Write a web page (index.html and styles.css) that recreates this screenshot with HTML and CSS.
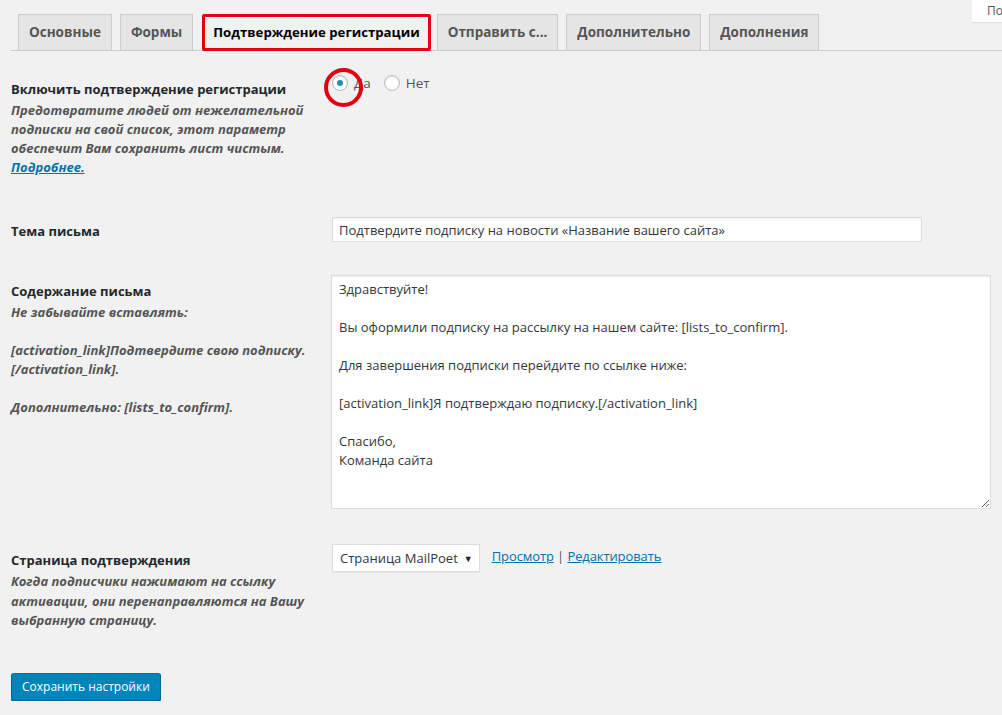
FILE: index.html
```
<!DOCTYPE html>
<html lang="ru">
	<head>
		<meta charset="UTF-8" />
		<meta name="viewport" content="width=device-width, initial-scale=1.0" />
		<title>Подтверждение регистрации</title>
		<link rel="stylesheet" href="styles.css">
	</head>
	<body>
		<div class="help-tab">Помощь</div>

		<div class="wrap">
			<nav class="tabs">
				<a class="tab" href="#">Основные</a>
				<a class="tab" href="#">Формы</a>
				<a class="tab active" href="#">Подтверждение регистрации</a>
				<a class="tab" href="#">Отправить с...</a>
				<a class="tab" href="#">Дополнительно</a>
				<a class="tab" href="#">Дополнения</a>
			</nav>

			<form class="settings">
				<div class="row row_confirm">
					<div class="label">
						<h4>Включить подтверждение регистрации</h4>
						<p class="desc">Предотвратите людей от нежелательной подписки на свой список, этот параметр обеспечит Вам сохранить лист чистым. <a href="#">Подробнее.</a></p>
					</div>
					<div class="field radios">
						<label class="radio">
							<span class="mark"><input type="radio" name="confirm" checked /></span>Да
						</label>
						<label class="radio">
							<input type="radio" name="confirm" />Нет
						</label>
					</div>
				</div>

				<div class="row row_subject">
					<div class="label">
						<h4>Тема письма</h4>
					</div>
					<div class="field">
						<input class="text" type="text" value="Подтвердите подписку на новости «Название вашего сайта»" />
					</div>
				</div>

				<div class="row row_body">
					<div class="label">
						<h4>Содержание письма</h4>
						<p class="desc">Не забывайте вставлять:</p>
						<p class="desc gap">[activation_link]Подтвердите свою подписку.<br />[/activation_link].</p>
						<p class="desc gap">Дополнительно: [lists_to_confirm].</p>
					</div>
					<div class="field">
						<textarea class="body">Здравствуйте!

Вы оформили подписку на рассылку на нашем сайте: [lists_to_confirm].

Для завершения подписки перейдите по ссылке ниже:

[activation_link]Я подтверждаю подписку.[/activation_link]

Спасибо,
Команда сайта</textarea>
					</div>
				</div>

				<div class="row row_page">
					<div class="label">
						<h4>Страница подтверждения</h4>
						<p class="desc">Когда подписчики нажимают на ссылку активации, они перенаправляются на Вашу выбранную страницу.</p>
					</div>
					<div class="field page">
						<span class="select">Страница MailPoet<i>▼</i></span>
						<span class="links"><a href="#">Просмотр</a> | <a href="#">Редактировать</a></span>
					</div>
				</div>

				<button class="save" type="button">Сохранить настройки</button>
			</form>
		</div>
	</body>
</html>
```
FILE: styles.css
```
* {
	padding: 0;
	margin: 0;
	box-sizing: border-box;
}

body {
	background-color: #f1f1f1;
	color: #23282d;
	font-family: "Open Sans", "Noto Sans", sans-serif;
	font-size: 13px;
	line-height: 19px;
	position: relative;
}

a {
	color: #0073aa;
}

.help-tab {
	position: absolute;
	top: 0;
	right: 0;
	width: 30px;
	height: 22px;
	padding-left: 15px;
	background-color: #fff;
	color: #555;
	font-size: 12px;
	line-height: 22px;
	white-space: nowrap;
	overflow: hidden;
	box-shadow: 0 1px 1px rgba(0, 0, 0, 0.06);
}

.wrap {
	padding: 15px 0 0 11px;
}

/* tabs */
.tabs {
	display: flex;
	align-items: flex-end;
	padding-left: 7px;
	border-bottom: 1px solid #ccc;
	height: 36px;
}

.tab {
	display: block;
	height: 36px;
	margin-right: 7px;
	padding: 5px 10px;
	border: 1px solid #ccc;
	border-bottom: 0;
	background-color: #e5e5e5;
	color: #555;
	font-weight: 700;
	font-size: 13.5px;
	line-height: 25px;
	text-decoration: none;
	white-space: nowrap;
}

.tab + .tab {
	margin-left: 1px;
}

.tab.active {
	height: 37px;
	margin-bottom: -1px;
	margin-left: 2px;
	margin-right: 5px;
	padding: 3px 8px;
	border: 3px solid #e3000f;
	border-radius: 2px;
	background-color: #f1f1f1;
	color: #000;
	font-size: 13.2px;
}

/* rows */
.row {
	display: grid;
	grid-template-columns: 321px 1fr;
	align-items: start;
}

.label h4 {
	font-size: 13px;
	font-weight: 700;
	line-height: 19px;
	color: #23282d;
}

.desc {
	font-style: italic;
	font-weight: 700;
	font-size: 13px;
	line-height: 19px;
	color: #555;
	padding-right: 6px;
}

.label h4 + .desc {
	margin-top: 2px;
}

.desc a {
	color: #0073aa;
}

.desc.gap {
	margin-top: 19px;
}

.row_confirm {
	margin-top: 23px;
}

.row_confirm .label {
	padding-top: 6px;
}

.row_subject {
	margin-top: 40px;
}

.row_subject .label {
	padding-top: 5px;
}

.row_body {
	margin-top: 33px;
}

.row_body .label {
	padding-top: 7px;
}

.row_page {
	margin-top: 35px;
}

.row_page .label {
	padding-top: 7px;
}

.row_page .desc {
	line-height: 19.5px;
}

/* radios */
.radios {
	display: flex;
	gap: 13px;
	padding-top: 1px;
}

.radio {
	display: flex;
	align-items: center;
	color: #555;
	font-size: 13.5px;
	line-height: 16px;
}

.radio input {
	appearance: none;
	width: 16px;
	height: 16px;
	margin-right: 6px;
	border: 1px solid #b4b9be;
	border-radius: 50%;
	background-color: #fff;
	box-shadow: inset 0 1px 2px rgba(0, 0, 0, 0.1);
	display: flex;
	align-items: center;
	justify-content: center;
}

.radio input:checked::before {
	content: '';
	width: 6px;
	height: 6px;
	border-radius: 50%;
	background-color: #1e8cbe;
}

.mark {
	position: relative;
	display: flex;
	margin-right: 6px;
}

.mark input {
	margin-right: 0;
}

.mark::after {
	content: '';
	position: absolute;
	left: -8px;
	top: -7px;
	width: 31px;
	height: 31px;
	border: 4px solid #e3000f;
	border-radius: 50%;
}

/* inputs */
.text {
	display: block;
	width: 590px;
	height: 25px;
	padding: 0 6px;
	border: 1px solid #ddd;
	background-color: #fff;
	box-shadow: inset 0 1px 2px rgba(0, 0, 0, 0.07);
	color: #32373c;
	font-family: inherit;
	font-size: 13px;
	outline: none;
}

.body {
	display: block;
	width: 660px;
	height: 234px;
	margin-left: -1px;
	padding: 4px 7px;
	border: 1px solid #ddd;
	background-color: #fff;
	box-shadow: inset 0 1px 2px rgba(0, 0, 0, 0.07);
	color: #32373c;
	font-family: inherit;
	font-size: 13px;
	line-height: 19px;
	outline: none;
}

.page {
	display: flex;
	align-items: flex-start;
	gap: 12px;
}

.select {
	display: flex;
	align-items: center;
	height: 28px;
	padding: 0 6px 0 7px;
	border: 1px solid #ddd;
	background-color: #fff;
	box-shadow: 0 1px 1px rgba(0, 0, 0, 0.04);
	color: #32373c;
	font-size: 13px;
	white-space: nowrap;
}

.select i {
	font-style: normal;
	font-size: 9px;
	margin-left: 6px;
	color: #222;
}

.links {
	line-height: 24px;
	color: #555;
	letter-spacing: -0.1px;
}

/* button */
.save {
	display: block;
	margin-top: 42px;
	height: 28px;
	padding: 0 10px;
	border: 1px solid;
	border-color: #0073aa #006799 #006799;
	border-radius: 3px;
	background-color: #0085ba;
	box-shadow: 0 1px 0 #006799;
	color: #fff;
	font-family: inherit;
	font-size: 12px;
	line-height: 26px;
}
```
